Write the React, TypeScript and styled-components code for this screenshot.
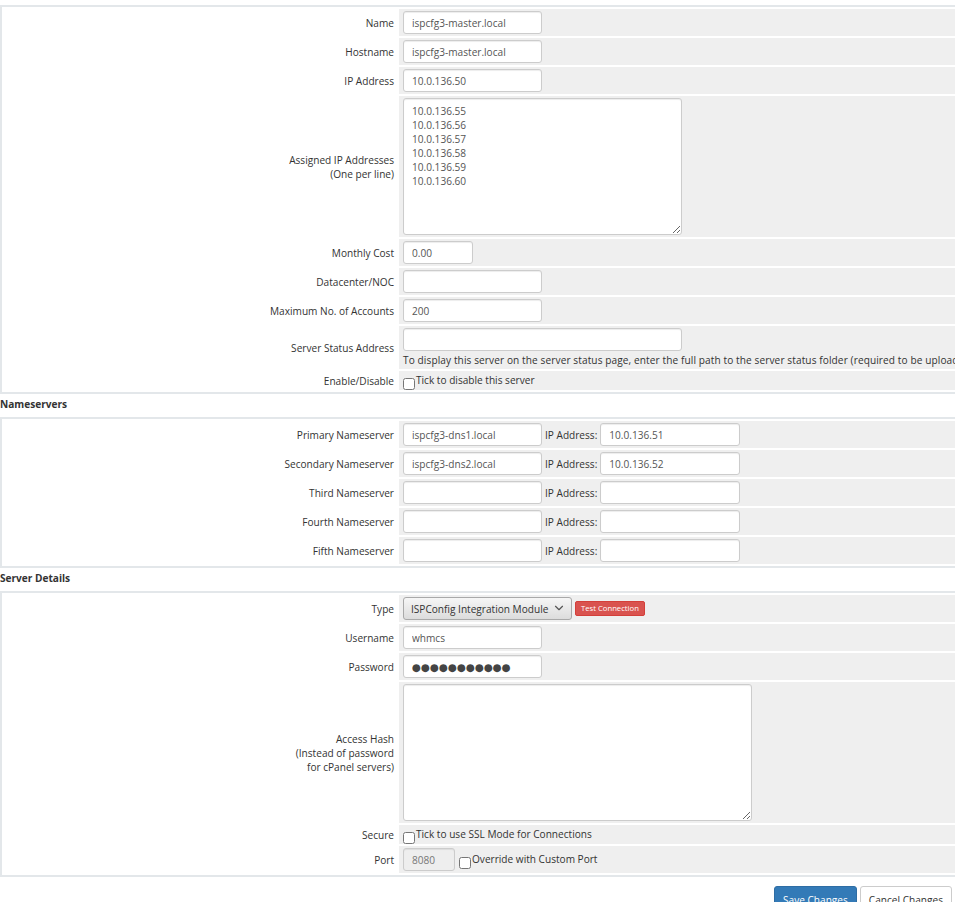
import React from 'react';
import styled, { createGlobalStyle } from 'styled-components';
import { ChevronDown } from 'lucide-react';

const GlobalStyle = createGlobalStyle`
  html, body {
    margin: 0;
    padding: 0;
    overflow: hidden;
    background: #ffffff;
  }

  body {
    font-family: 'Open Sans', 'Noto Sans', sans-serif;
    font-size: 10.1px;
    line-height: 14px;
    color: #333333;
  }
`;

const Page = styled.div`
  width: 1726px;
  padding-top: 5px;
`;

const FormTable = styled.table`
  width: 100%;
  border: 2px solid #e3e7ea;
  border-spacing: 2px;
  border-collapse: separate;
`;

const Label = styled.td`
  width: 387px;
  padding: 2px 3px;
  text-align: right;
  background: #ffffff;
  white-space: nowrap;
`;

const Field = styled.td`
  padding: 2px 4px;
  background: #efefef;
`;

const SectionTitle = styled.div`
  font-weight: bold;
  padding: 3px 0 6px;
`;

const FieldRow = styled.div<{ $gap?: number }>`
  display: flex;
  align-items: center;
  gap: ${(p) => p.$gap ?? 3}px;
`;

const TextInput = styled.input<{ $w: number; $dots?: boolean }>`
  box-sizing: border-box;
  display: block;
  width: ${(p) => p.$w}px;
  height: 23px;
  margin: 0;
  padding: 0 8px;
  border: 1px solid #cccccc;
  border-radius: 3px;
  background: #ffffff;
  box-shadow: inset 0 1px 1px rgba(0, 0, 0, 0.075);
  font: inherit;
  color: #555555;
  outline: none;

  ${(p) =>
    p.$dots &&
    `
    font-family: 'DejaVu Sans', sans-serif;
    font-size: 10.3px;
    letter-spacing: 0;
    color: #444444;
  `}

  &:disabled {
    background: #eeeeee;
    color: #777777;
  }
`;

const TextArea = styled.textarea<{ $w: number }>`
  box-sizing: border-box;
  display: block;
  width: ${(p) => p.$w}px;
  height: 137px;
  margin: 0;
  padding: 5px 8px;
  border: 1px solid #cccccc;
  border-radius: 3px;
  background: #ffffff;
  box-shadow: inset 0 1px 1px rgba(0, 0, 0, 0.075);
  font: inherit;
  color: #555555;
  outline: none;
`;

const Hint = styled.div`
  margin-top: 2px;
  white-space: nowrap;
  letter-spacing: 0.1px;
`;

const CheckLine = styled.label`
  display: flex;
  align-items: flex-start;
  height: 15px;
  white-space: nowrap;

  input {
    width: 12px;
    height: 12px;
    margin: 5px 1px 0 0;
  }
`;

const SelectWrap = styled.div`
  position: relative;
  width: 169px;
  height: 23px;
`;

const Select = styled.select`
  appearance: none;
  box-sizing: border-box;
  width: 100%;
  height: 100%;
  margin: 0;
  padding: 0 18px 0 7px;
  border: 1px solid #a9a9a9;
  border-radius: 3px;
  background: linear-gradient(#f6f6f6, #dcdcdc);
  font: inherit;
  color: #333333;
  outline: none;
`;

const Chevron = styled(ChevronDown)`
  position: absolute;
  right: 6px;
  top: 4px;
  color: #555555;
  pointer-events: none;
`;

const SmallDanger = styled.button`
  box-sizing: border-box;
  height: 15px;
  padding: 0 5px;
  border: 1px solid #d43f3a;
  border-radius: 2px;
  background: #d9534f;
  color: #ffffff;
  font-family: inherit;
  font-size: 7.7px;
  line-height: 13px;
`;

const ButtonBar = styled.div`
  display: flex;
  justify-content: center;
  gap: 3px;
  padding-top: 9px;
`;

const Button = styled.button<{ $primary?: boolean }>`
  box-sizing: border-box;
  height: 28px;
  padding: 0 8px;
  border: 1px solid ${(p) => (p.$primary ? '#2e6da4' : '#cccccc')};
  border-radius: 3px;
  background: ${(p) => (p.$primary ? '#337ab7' : '#ffffff')};
  color: ${(p) => (p.$primary ? '#ffffff' : '#333333')};
  font: inherit;
`;

const assignedIps = [
  '10.0.136.55',
  '10.0.136.56',
  '10.0.136.57',
  '10.0.136.58',
  '10.0.136.59',
  '10.0.136.60',
].join('\n');

const nameservers = [
  { label: 'Primary Nameserver', host: 'ispcfg3-dns1.local', ip: '10.0.136.51' },
  { label: 'Secondary Nameserver', host: 'ispcfg3-dns2.local', ip: '10.0.136.52' },
  { label: 'Third Nameserver', host: '', ip: '' },
  { label: 'Fourth Nameserver', host: '', ip: '' },
  { label: 'Fifth Nameserver', host: '', ip: '' },
];

const App: React.FC = () => {
  return (
    <Page>
      <GlobalStyle />

      <FormTable>
        <tbody>
          <tr>
            <Label>Name</Label>
            <Field>
              <TextInput $w={139} defaultValue="ispcfg3-master.local" />
            </Field>
          </tr>
          <tr>
            <Label>Hostname</Label>
            <Field>
              <TextInput $w={139} defaultValue="ispcfg3-master.local" />
            </Field>
          </tr>
          <tr>
            <Label>IP Address</Label>
            <Field>
              <TextInput $w={139} defaultValue="10.0.136.50" />
            </Field>
          </tr>
          <tr>
            <Label>
              Assigned IP Addresses
              <br />
              (One per line)
            </Label>
            <Field>
              <TextArea $w={279} defaultValue={assignedIps} />
            </Field>
          </tr>
          <tr>
            <Label>Monthly Cost</Label>
            <Field>
              <TextInput $w={70} defaultValue="0.00" />
            </Field>
          </tr>
          <tr>
            <Label>Datacenter/NOC</Label>
            <Field>
              <TextInput $w={139} defaultValue="" />
            </Field>
          </tr>
          <tr>
            <Label>Maximum No. of Accounts</Label>
            <Field>
              <TextInput $w={139} defaultValue="200" />
            </Field>
          </tr>
          <tr>
            <Label>Server Status Address</Label>
            <Field>
              <TextInput $w={279} defaultValue="" />
              <Hint>
                To display this server on the server status page, enter the full path to the server
                status folder (required to be uploaded to each server you want to show) - eg.
                http://www.example.com/status/
              </Hint>
            </Field>
          </tr>
          <tr>
            <Label>Enable/Disable</Label>
            <Field>
              <CheckLine>
                <input type="checkbox" />
                Tick to disable this server
              </CheckLine>
            </Field>
          </tr>
        </tbody>
      </FormTable>

      <SectionTitle>Nameservers</SectionTitle>

      <FormTable>
        <tbody>
          {nameservers.map((ns) => (
            <tr key={ns.label}>
              <Label>{ns.label}</Label>
              <Field>
                <FieldRow>
                  <TextInput $w={139} defaultValue={ns.host} />
                  IP Address:
                  <TextInput $w={140} defaultValue={ns.ip} />
                </FieldRow>
              </Field>
            </tr>
          ))}
        </tbody>
      </FormTable>

      <SectionTitle>Server Details</SectionTitle>

      <FormTable>
        <tbody>
          <tr>
            <Label>Type</Label>
            <Field>
              <FieldRow>
                <SelectWrap>
                  <Select defaultValue="ispconfig">
                    <option value="ispconfig">ISPConfig Integration Module</option>
                  </Select>
                  <Chevron size={14} strokeWidth={2} />
                </SelectWrap>
                <SmallDanger type="button">Test Connection</SmallDanger>
              </FieldRow>
            </Field>
          </tr>
          <tr>
            <Label>Username</Label>
            <Field>
              <TextInput $w={139} defaultValue="whmcs" />
            </Field>
          </tr>
          <tr>
            <Label>Password</Label>
            <Field>
              <TextInput $w={139} $dots readOnly defaultValue="●●●●●●●●●●●" />
            </Field>
          </tr>
          <tr>
            <Label>
              Access Hash
              <br />
              (Instead of password
              <br />
              for cPanel servers)
            </Label>
            <Field>
              <TextArea $w={349} defaultValue="" />
            </Field>
          </tr>
          <tr>
            <Label>Secure</Label>
            <Field>
              <CheckLine>
                <input type="checkbox" />
                Tick to use SSL Mode for Connections
              </CheckLine>
            </Field>
          </tr>
          <tr>
            <Label>Port</Label>
            <Field>
              <FieldRow $gap={4}>
                <TextInput $w={52} disabled defaultValue="8080" />
                <CheckLine>
                  <input type="checkbox" />
                  Override with Custom Port
                </CheckLine>
              </FieldRow>
            </Field>
          </tr>
        </tbody>
      </FormTable>

      <ButtonBar>
        <Button $primary type="button">
          Save Changes
        </Button>
        <Button type="button">Cancel Changes</Button>
      </ButtonBar>
    </Page>
  );
};

export default App;
